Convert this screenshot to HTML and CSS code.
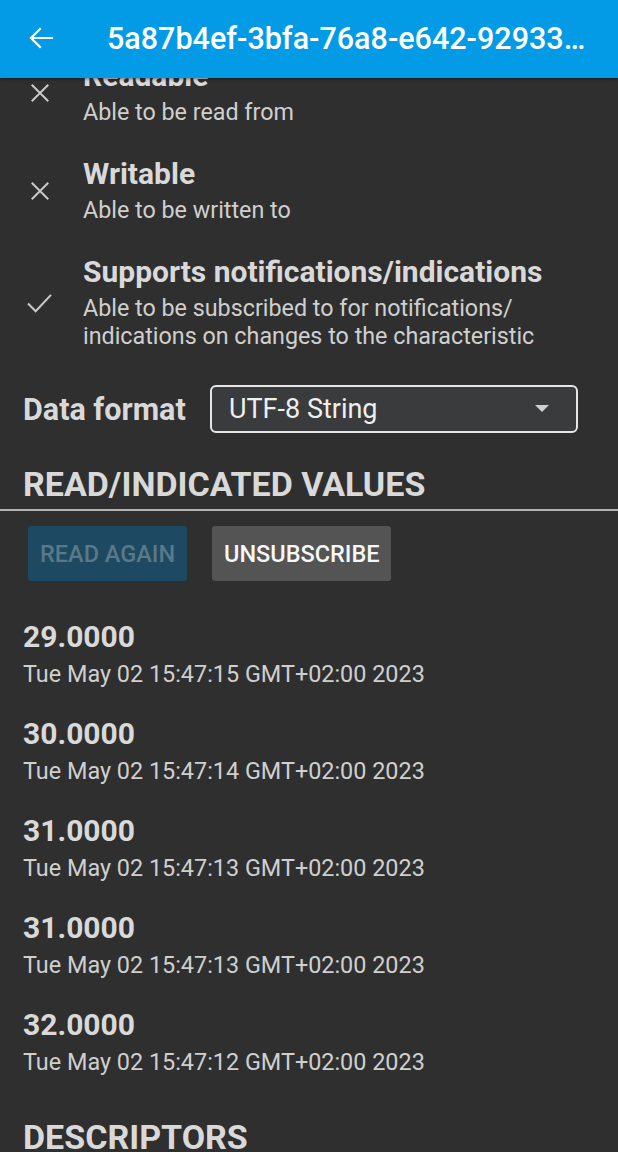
FILE: index.html
```html
<!DOCTYPE html>
<html>
<head>
<meta charset="utf-8">
<link rel="stylesheet" href="styles.css">
</head>
<body>
<header class="appbar">
  <svg class="back" width="26" height="22" viewBox="0 0 26 22"><path d="M24 11H3M12 2L3 11l9 9" fill="none" stroke="#fff" stroke-width="2.2" stroke-linecap="square"/></svg>
  <div class="appbar-title">5a87b4ef-3bfa-76a8-e642-92933…</div>
</header>
<main class="content">
  <div class="props">
    <div class="prop">
      <div class="prop-icon-box"><svg class="prop-icon" width="22" height="22" viewBox="0 0 24 24"><path d="M3 3l18 18M21 3L3 21" stroke="#c9c9c9" stroke-width="2.2" fill="none"/></svg></div>
      <div class="prop-text">
        <div class="prop-title">Readable</div>
        <div class="prop-sub">Able to be read from</div>
      </div>
    </div>
    <div class="prop">
      <div class="prop-icon-box"><svg class="prop-icon" width="22" height="22" viewBox="0 0 24 24"><path d="M3 3l18 18M21 3L3 21" stroke="#c9c9c9" stroke-width="2.2" fill="none"/></svg></div>
      <div class="prop-text">
        <div class="prop-title">Writable</div>
        <div class="prop-sub">Able to be written to</div>
      </div>
    </div>
    <div class="prop">
      <div class="prop-icon-box"><svg class="prop-icon check" width="27" height="23" viewBox="0 0 28 24"><path d="M2 12l8 8L26 3" stroke="#c9c9c9" stroke-width="2.2" fill="none"/></svg></div>
      <div class="prop-text">
        <div class="prop-title">Supports notifications/indications</div>
        <div class="prop-sub">Able to be subscribed to for notifications/ indications on changes to the characteristic</div>
      </div>
    </div>
  </div>

  <div class="format-row">
    <div class="format-label">Data format</div>
    <div class="select">
      <span>UTF-8 String</span>
      <svg width="14" height="8" viewBox="0 0 14 8"><path d="M0 0h14L7 7z" fill="#cfcfcf"/></svg>
    </div>
  </div>

  <h2 class="section-title">READ/INDICATED VALUES</h2>
</main>
<div class="divider"></div>
<main class="content">
  <div class="buttons">
    <button class="btn btn-disabled">READ AGAIN</button>
    <button class="btn btn-grey">UNSUBSCRIBE</button>
  </div>

  <div class="values">
    <div class="value"><div class="value-num">29.0000</div><div class="value-date">Tue May 02 15:47:15 GMT+02:00 2023</div></div>
    <div class="value"><div class="value-num">30.0000</div><div class="value-date">Tue May 02 15:47:14 GMT+02:00 2023</div></div>
    <div class="value"><div class="value-num">31.0000</div><div class="value-date">Tue May 02 15:47:13 GMT+02:00 2023</div></div>
    <div class="value"><div class="value-num">31.0000</div><div class="value-date">Tue May 02 15:47:13 GMT+02:00 2023</div></div>
    <div class="value"><div class="value-num">32.0000</div><div class="value-date">Tue May 02 15:47:12 GMT+02:00 2023</div></div>
  </div>

  <h2 class="section-title descriptors">DESCRIPTORS</h2>
</main>
</body>
</html>
```

FILE: styles.css
```css
html, body {
  margin: 0;
  padding: 0;
}
body {
  background: #2f2f2f;
  font-family: Roboto, "Noto Sans", sans-serif;
  color: #d6d6d6;
  width: 618px;
  height: 1152px;
  overflow: hidden;
}
.appbar {
  position: relative;
  z-index: 2;
  height: 78px;
  background: #039be5;
  display: flex;
  align-items: center;
  padding-left: 28px;
  box-shadow: 0 1px 3px rgba(0,0,0,0.5);
}
.back {
  display: block;
  margin-top: -2px;
}
.appbar-title {
  margin-left: 53px;
  color: #fff;
  font-size: 30.5px;
  font-weight: 500;
  white-space: nowrap;
  margin-top: -2px;
}
.content {
  display: block;
  padding: 0 23px;
}
.props {
  margin-top: -18px;
  display: flex;
  flex-direction: column;
  gap: 32px;
}
.prop {
  display: flex;
  align-items: center;
}
.prop-icon-box {
  flex: none;
  width: 60px;
  display: flex;
  align-items: center;
}
.prop-icon {
  display: block;
  margin-left: 6px;
}
.prop-icon.check {
  margin-left: 3px;
}
.prop-title {
  font-size: 30px;
  font-weight: 700;
  line-height: 32px;
  color: #d9d9d9;
}
.prop-sub {
  margin-top: 6px;
  font-size: 23.3px;
  line-height: 28px;
  color: #cfcfcf;
}
.format-row {
  margin-top: 35px;
  display: flex;
  align-items: center;
}
.format-label {
  font-size: 30.5px;
  font-weight: 700;
  width: 187px;
  color: #d9d9d9;
}
.select {
  box-sizing: border-box;
  width: 368px;
  height: 48px;
  border: 2px solid #e6e6e6;
  border-radius: 6px;
  background: #3a3b3c;
  display: flex;
  align-items: center;
  justify-content: space-between;
  padding: 0 27px 0 17px;
  font-size: 27px;
  color: #efefef;
}
.section-title {
  margin: 33px 0 0 0;
  font-size: 34px;
  font-weight: 700;
  line-height: 36px;
  color: #d9d9d9;
}
.divider {
  margin-top: 7px;
  height: 2px;
  background: #b3b3b3;
}
.buttons {
  margin-top: 15px;
  padding-left: 5px;
  display: flex;
  gap: 25px;
}
.btn {
  height: 55px;
  border: none;
  border-radius: 3px;
  font-family: Roboto, sans-serif;
  font-size: 23.5px;
  font-weight: 500;
  padding: 0 12px;
  white-space: nowrap;
}
.btn-disabled {
  width: 159px;
  background: #1d4a62;
  color: #5a7888;
}
.btn-grey {
  width: 179px;
  background: #545454;
  color: #f7f7f7;
}
.values {
  margin-top: 39px;
  display: flex;
  flex-direction: column;
  gap: 29.5px;
}
.value-num {
  font-size: 30px;
  font-weight: 700;
  line-height: 34px;
  color: #d9d9d9;
}
.value-date {
  margin-top: 5.5px;
  font-size: 23.4px;
  line-height: 28px;
  color: #cfcfcf;
}
.descriptors {
  margin-top: 43px;
}
```
